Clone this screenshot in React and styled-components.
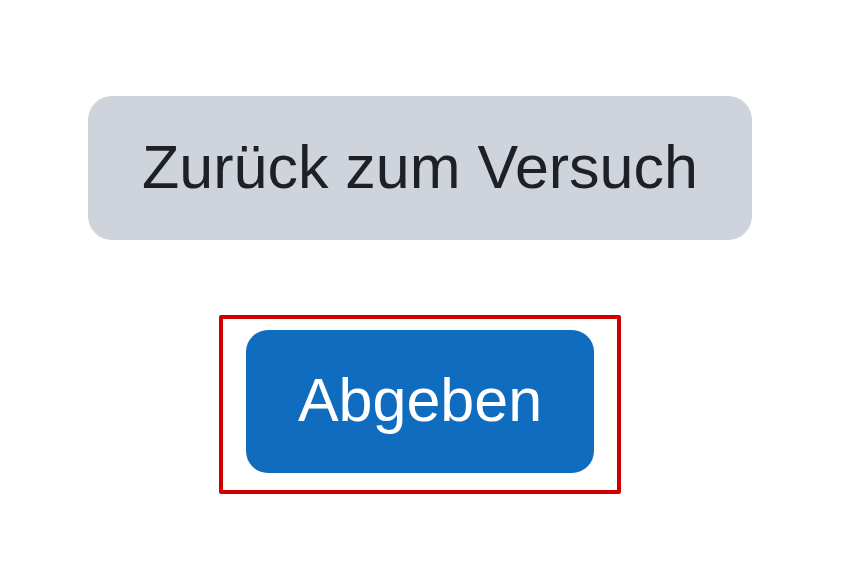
import React from "react";
import styled, { createGlobalStyle } from "styled-components";

const GlobalStyle = createGlobalStyle`
  html, body {
    margin: 0;
    padding: 0;
    background: #ffffff;
  }
  body {
    font-family: "Liberation Sans", Arial, sans-serif;
  }
`;

const Page = styled.div`
  width: 840px;
  height: 584px;
  display: flex;
  flex-direction: column;
  align-items: center;
  padding-top: 96px;
  box-sizing: border-box;
`;

const Button = styled.button`
  display: flex;
  align-items: center;
  justify-content: center;
  box-sizing: border-box;
  border: none;
  font-family: "Liberation Sans", Arial, sans-serif;
  font-size: 61px;
  line-height: 1;
  cursor: pointer;
  background: ${(p) => (p.$primary ? "#0f6cbf" : "#cfd4dc")};
  color: ${(p) => (p.$primary ? "#ffffff" : "#1d2125")};
  width: ${(p) => (p.$primary ? "348px" : "664px")};
  height: ${(p) => (p.$primary ? "143px" : "144px")};
  border-radius: ${(p) => (p.$primary ? "22px" : "24px")};
  padding: 0 0 2px;
`;

const Highlight = styled.div`
  margin-top: 75px;
  border: 4px solid #d10000;
  border-radius: 2px;
  padding: 11px 23px 17px;
  display: flex;
`;

export default function App() {
  return (
    <>
      <GlobalStyle />
      <Page>
        <Button>Zurück zum Versuch</Button>
        <Highlight>
          <Button $primary>Abgeben</Button>
        </Highlight>
      </Page>
    </>
  );
}
